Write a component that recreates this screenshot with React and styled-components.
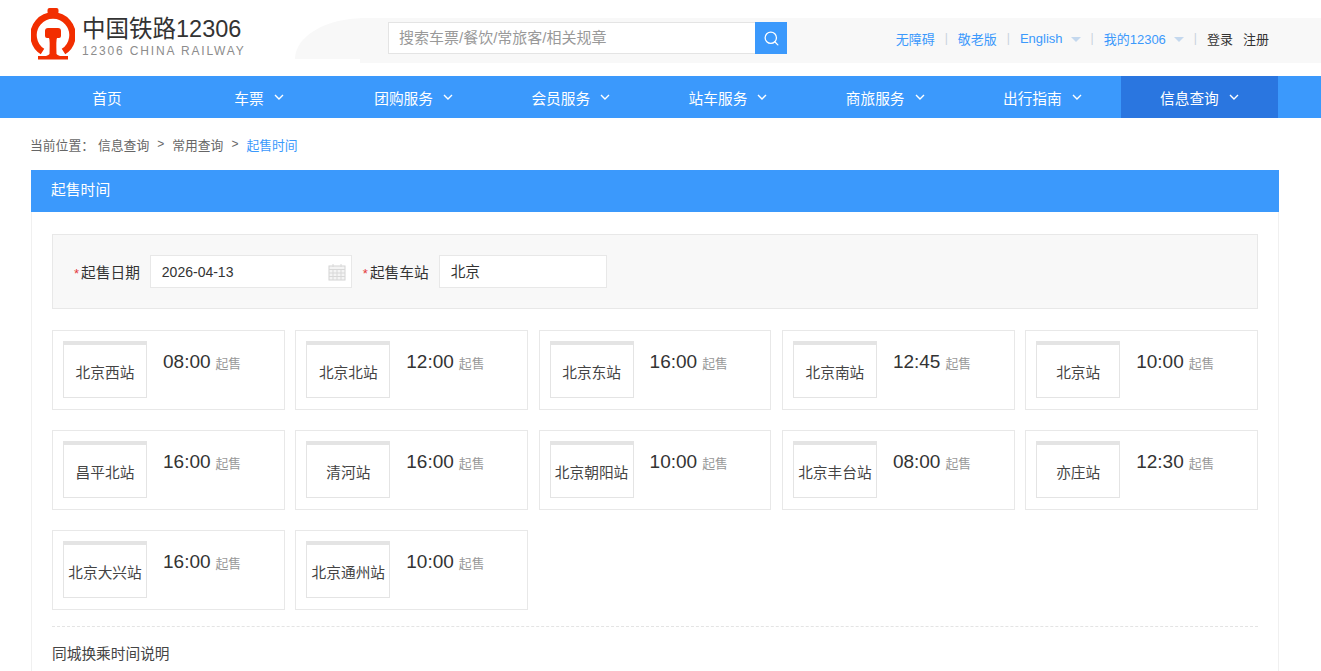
import React from 'react'
import styled, { createGlobalStyle } from 'styled-components'
import { Search } from 'lucide-react'

const FONT = '"Liberation Sans", "Noto Sans CJK SC", sans-serif'

const navItems = [
  { label: '首页', width: 152 },
  { label: '车票', width: 152, caret: true },
  { label: '团购服务', width: 157.2, caret: true },
  { label: '会员服务', width: 157.2, caret: true },
  { label: '站车服务', width: 157.2, caret: true },
  { label: '商旅服务', width: 157.2, caret: true },
  { label: '出行指南', width: 157.2, caret: true },
  { label: '信息查询', width: 157, caret: true, active: true },
]

const stations = [
  ['北京西站', '08:00'],
  ['北京北站', '12:00'],
  ['北京东站', '16:00'],
  ['北京南站', '12:45'],
  ['北京站', '10:00'],
  ['昌平北站', '16:00'],
  ['清河站', '16:00'],
  ['北京朝阳站', '10:00'],
  ['北京丰台站', '08:00'],
  ['亦庄站', '12:30'],
  ['北京大兴站', '16:00'],
  ['北京通州站', '10:00'],
]

const Logo = () => (
  <svg width="44" height="52" viewBox="0 0 44 52">
    <rect x="16.5" y="0" width="11" height="6" rx="2" fill="#f22e00" />
    <path d="M11.5 43.5 A19.5 19.5 0 1 1 32.5 43.5" fill="none" stroke="#f22e00" strokeWidth="6.5" />
    <path
      d="M14 23 Q14 20 17 20 H27 Q30 20 30 23 V28 Q30 30 28 30 H26 Q25 31 25.500 46 Q26 47 29 48 L37 48 V51.500 H7 V48 L15 48 Q18 47 18.500 46 Q19 31 18 30 H16 Q14 30 14 28 Z"
      fill="#f22e00"
    />
  </svg>
)

const Caret = () => (
  <svg width="10" height="6" viewBox="0 0 10 6">
    <path d="M1 1 L5 5 L9 1" fill="none" stroke="#fff" strokeWidth="1.4" />
  </svg>
)

const CalendarIcon = () => (
  <svg width="18" height="18" viewBox="0 0 18 18">
    <rect x="1" y="3" width="16" height="14" fill="#f4f4f4" stroke="#d4d4d4" />
    <path d="M1 6.500 H17 M1 10 H17 M1 13.500 H17 M5 6 V17 M9 6 V17 M13 6 V17 M5 1 V4 M13 1 V4" stroke="#d8d8d8" fill="none" />
  </svg>
)

export default function App() {
  return (
    <>
      <GlobalStyle />
      <Header>
        <Brand>
          <Logo />
          <BrandText>
            <BrandName>中国铁路12306</BrandName>
            <BrandSub>12306 CHINA RAILWAY</BrandSub>
          </BrandText>
        </Brand>
        <HeaderBand>
          <SearchBox>
            <SearchInput>搜索车票/餐饮/常旅客/相关规章</SearchInput>
            <SearchButton>
              <Search size={17} strokeWidth={1.8} color="#fff" />
            </SearchButton>
          </SearchBox>
          <TopLinks>
            <TopLink>无障碍</TopLink>
            <Sep>|</Sep>
            <TopLink>敬老版</TopLink>
            <Sep>|</Sep>
            <TopLink>English</TopLink>
            <DownArrow />
            <Sep>|</Sep>
            <TopLink>我的12306</TopLink>
            <DownArrow />
            <Sep>|</Sep>
            <AuthLink>登录</AuthLink>
            <AuthLink>注册</AuthLink>
          </TopLinks>
        </HeaderBand>
      </Header>

      <Nav>
        <NavInner>
          {navItems.map((item) => (
            <NavItem key={item.label} $width={item.width} $active={item.active}>
              {item.label}
              {item.caret && <Caret />}
            </NavItem>
          ))}
        </NavInner>
      </Nav>

      <Crumbs>
        当前位置：<CrumbLink>信息查询</CrumbLink>
        <CrumbArrow>&gt;</CrumbArrow>常用查询
        <CrumbArrow>&gt;</CrumbArrow>
        <CrumbCurrent>起售时间</CrumbCurrent>
      </Crumbs>

      <Panel>
        <PanelTitle>起售时间</PanelTitle>
        <PanelBody>
          <FilterBar>
            <FieldLabel>
              <Star>*</Star>起售日期
            </FieldLabel>
            <DateInput>
              2026-04-13
              <CalendarIcon />
            </DateInput>
            <FieldLabel>
              <Star>*</Star>起售车站
            </FieldLabel>
            <StationInput>北京</StationInput>
          </FilterBar>

          <StationGrid>
            {stations.map(([name, time]) => (
              <StationCard key={name}>
                <Ticket>{name}</Ticket>
                <TimeLine>
                  <Time>{time}</Time>
                  <TimeNote>起售</TimeNote>
                </TimeLine>
              </StationCard>
            ))}
          </StationGrid>

          <Notes>同城换乘时间说明</Notes>
        </PanelBody>
      </Panel>
    </>
  )
}

const GlobalStyle = createGlobalStyle`
  html, body {
    margin: 0;
    height: 671px;
    overflow: hidden;
    background: #fff;
  }
  body {
    font-family: ${FONT};
    color: #333;
  }
`

const Header = styled.header`
  height: 76px;
  display: flex;
  background: #fff;
`

const Brand = styled.div`
  width: 295px;
  padding: 8px 0 0 31px;
  box-sizing: border-box;
  display: flex;
  gap: 7px;
`

const BrandText = styled.div`
  display: flex;
  flex-direction: column;
  padding-top: 7px;
`

const BrandName = styled.div`
  font-size: 23.5px;
  line-height: 28px;
  color: #333;
  white-space: nowrap;
`

const BrandSub = styled.div`
  font-size: 12px;
  line-height: 15px;
  margin-top: 1px;
  letter-spacing: 1.85px;
  color: #8c8c8c;
  white-space: nowrap;
`

const HeaderBand = styled.div`
  flex: 1;
  height: 41px;
  margin-top: 18px;
  display: flex;
  align-items: flex-start;
  justify-content: space-between;
  padding: 4px 52px 0 93px;
  background: linear-gradient(#f8f8f8, #f8f8f8) no-repeat 65px 0 / 100% 100%;
  position: relative;

  &::before {
    content: '';
    position: absolute;
    left: 0;
    top: 0;
    width: 70px;
    height: 41px;
    background: #f8f8f8;
    border-radius: 100% 0 0 0 / 100% 0 0 0;
  }
`

const SearchBox = styled.div`
  position: relative;
  display: flex;
  width: 399px;
  height: 32px;
`

const SearchInput = styled.div`
  flex: 1;
  box-sizing: border-box;
  border: 1px solid #e4e4e4;
  border-right: 0;
  background: #fff;
  padding-left: 10px;
  font-size: 15px;
  line-height: 30px;
  color: #999;
`

const SearchButton = styled.div`
  width: 32px;
  display: flex;
  align-items: center;
  justify-content: center;
  background: #3b99fc;
`

const TopLinks = styled.div`
  display: flex;
  align-items: center;
  height: 32px;
  font-size: 13px;
  white-space: nowrap;
`

const TopLink = styled.span`
  color: #3b99fc;
`

const Sep = styled.span`
  color: #c8d2dc;
  font-size: 12px;
  margin: 0 10px;
`

const DownArrow = styled.i`
  width: 0;
  height: 0;
  margin: 3px 0 0 8px;
  border-left: 5px solid transparent;
  border-right: 5px solid transparent;
  border-top: 5px solid #c4d8ee;
`

const AuthLink = styled.span`
  color: #333;
  margin-right: 10px;

  &:last-child {
    margin-right: 0;
  }
`

const Nav = styled.nav`
  height: 42px;
  background: #3b99fc;
`

const NavInner = styled.div`
  display: flex;
  margin-left: 31px;
  width: 1248px;
`

const NavItem = styled.div`
  width: ${(p) => p.$width}px;
  height: 42px;
  display: flex;
  align-items: center;
  justify-content: center;
  gap: 10px;
  flex: none;
  font-size: 14.7px;
  color: #fff;
  background: ${(p) => (p.$active ? '#2a76e0' : 'transparent')};
`

const Crumbs = styled.div`
  height: 52px;
  margin-left: 30px;
  display: flex;
  align-items: center;
  font-size: 12.8px;
  color: #666;
`

const CrumbLink = styled.span`
  margin-left: 4px;
`

const CrumbArrow = styled.span`
  margin: 0 8px;
  font-size: 12px;
`

const CrumbCurrent = styled.span`
  color: #3b99fc;
`

const Panel = styled.section`
  width: 1248px;
  margin-left: 31px;
`

const PanelTitle = styled.div`
  height: 42px;
  line-height: 41px;
  padding-left: 20px;
  font-size: 14.8px;
  color: #fff;
  background: #3b99fc;
`

const PanelBody = styled.div`
  box-sizing: border-box;
  border: 1px solid #f0f0f0;
  border-top: 0;
  padding: 22px 20px 0;
  height: 600px;
`

const FilterBar = styled.div`
  box-sizing: border-box;
  height: 75px;
  padding-left: 21px;
  display: flex;
  align-items: center;
  background: #f8f8f8;
  border: 1px solid #e8e8e8;
`

const FieldLabel = styled.label`
  font-size: 14.7px;
  color: #333;
  margin-right: 10px;
  white-space: nowrap;
`

const Star = styled.span`
  color: #e4393c;
  margin-right: 2px;
  font-size: 13px;
`

const DateInput = styled.div`
  box-sizing: border-box;
  width: 202px;
  height: 33px;
  margin-right: 11px;
  padding: 0 5px 0 11px;
  display: flex;
  align-items: center;
  justify-content: space-between;
  font-size: 14px;
  color: #333;
  background: #fff;
  border: 1px solid #e8e8e8;
`

const StationInput = styled.div`
  box-sizing: border-box;
  width: 168px;
  height: 33px;
  padding-left: 11px;
  line-height: 32px;
  font-size: 14.7px;
  color: #333;
  background: #fff;
  border: 1px solid #e8e8e8;
`

const StationGrid = styled.div`
  display: grid;
  grid-template-columns: repeat(5, 1fr);
  column-gap: 10.5px;
  row-gap: 20px;
  margin-top: 21px;
  padding-bottom: 16px;
  border-bottom: 1px dashed #e4e4e4;
`

const StationCard = styled.div`
  box-sizing: border-box;
  height: 80px;
  padding: 10px;
  display: flex;
  align-items: flex-start;
  gap: 16px;
  border: 1px solid #e8e8e8;
`

const Ticket = styled.div`
  box-sizing: border-box;
  width: 84px;
  height: 57px;
  flex: none;
  display: flex;
  align-items: center;
  justify-content: center;
  font-size: 14.7px;
  color: #444;
  white-space: nowrap;
  border: 1px solid #e4e4e4;
  border-top-width: 4px;
`

const TimeLine = styled.div`
  display: flex;
  align-items: baseline;
  gap: 5px;
  padding-top: 10px;
`

const Time = styled.span`
  font-size: 19px;
  line-height: 22px;
  color: #333;
`

const TimeNote = styled.span`
  font-size: 12.8px;
  color: #999;
`

const Notes = styled.div`
  margin-top: 16px;
  font-size: 14.7px;
  line-height: 22px;
  color: #444;
`
